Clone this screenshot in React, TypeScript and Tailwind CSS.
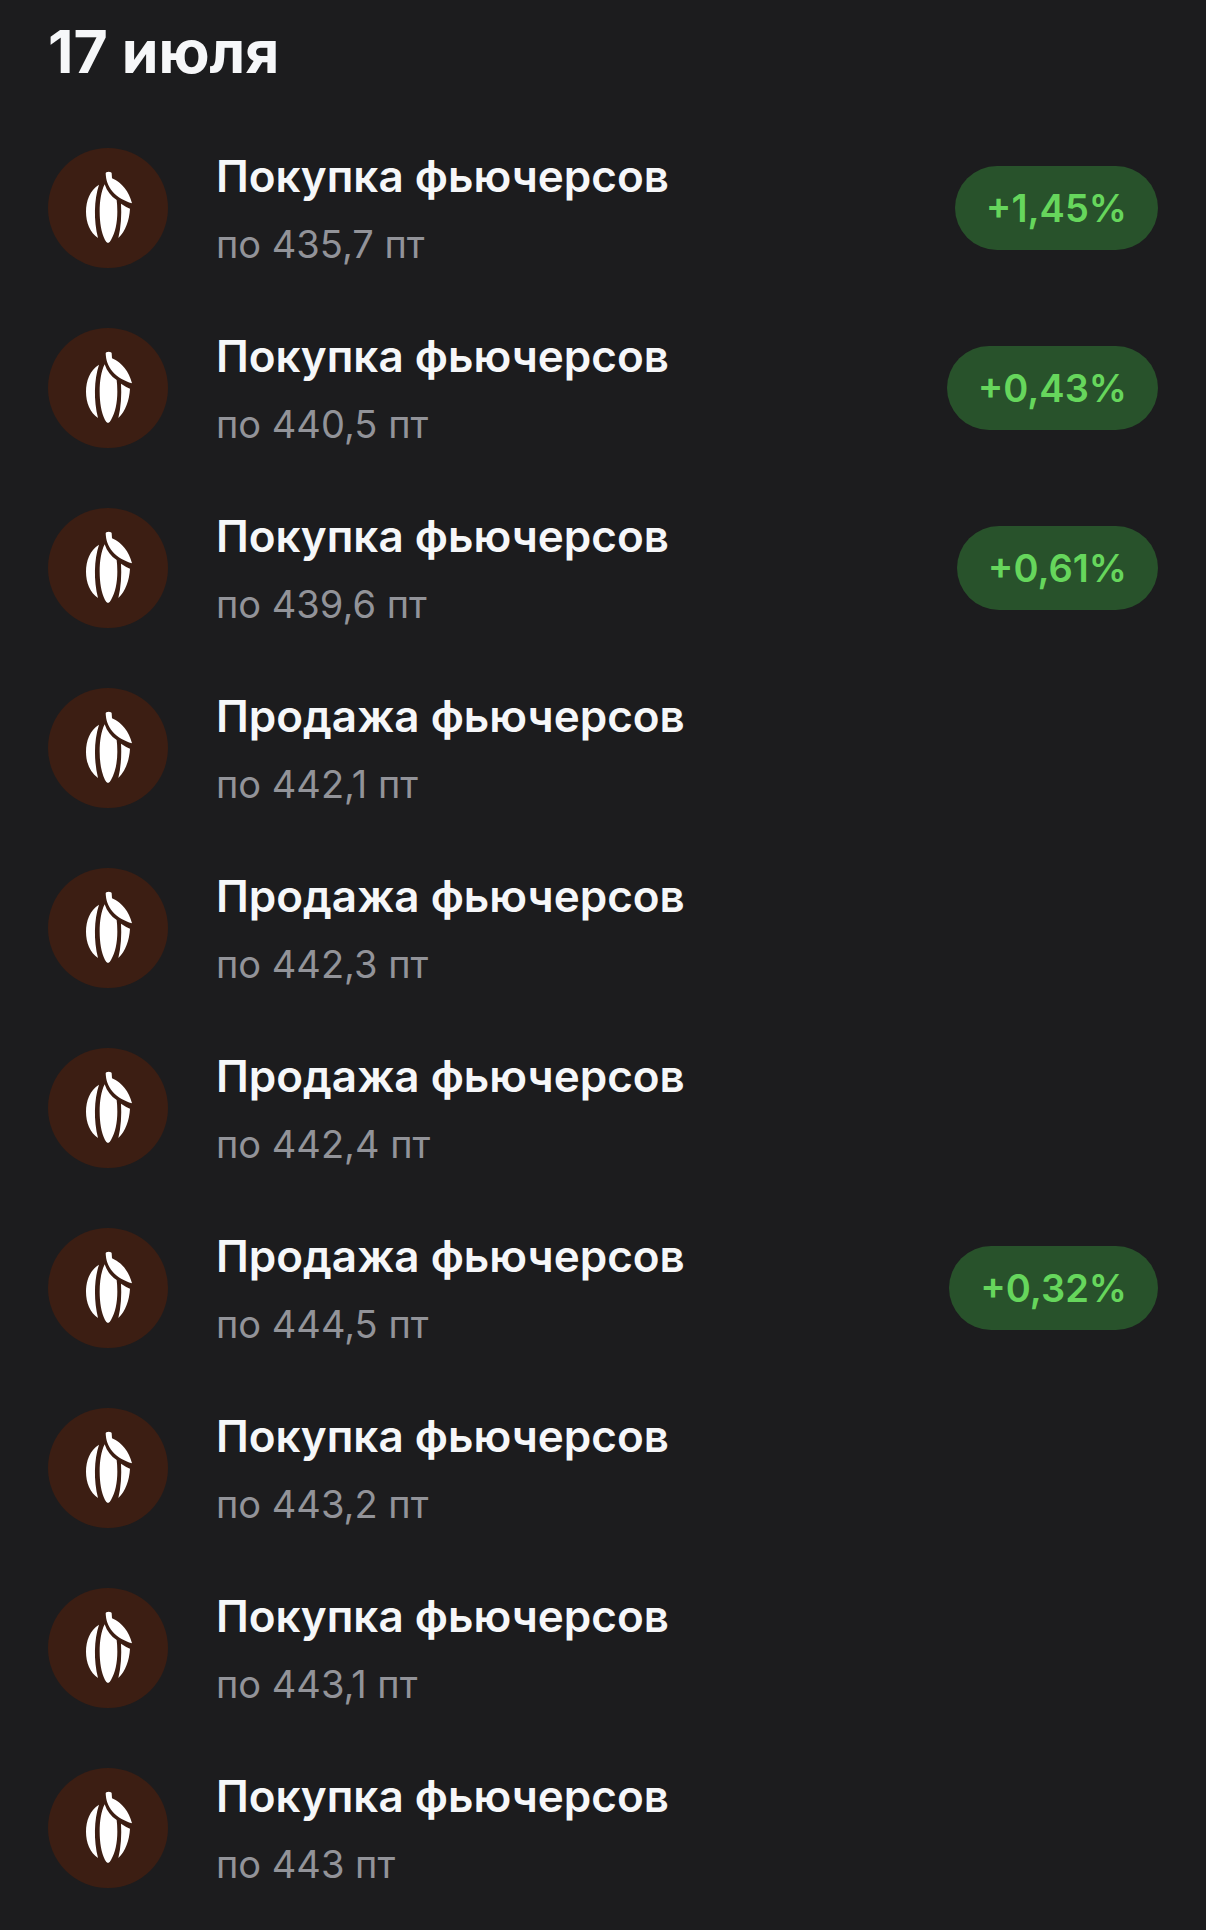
type Operation = {
  id: number;
  title: string;
  price: string;
  change?: string;
};

const operations: Operation[] = [
  { id: 1, title: "Покупка фьючерсов", price: "435,7", change: "+1,45%" },
  { id: 2, title: "Покупка фьючерсов", price: "440,5", change: "+0,43%" },
  { id: 3, title: "Покупка фьючерсов", price: "439,6", change: "+0,61%" },
  { id: 4, title: "Продажа фьючерсов", price: "442,1" },
  { id: 5, title: "Продажа фьючерсов", price: "442,3" },
  { id: 6, title: "Продажа фьючерсов", price: "442,4" },
  { id: 7, title: "Продажа фьючерсов", price: "444,5", change: "+0,32%" },
  { id: 8, title: "Покупка фьючерсов", price: "443,2" },
  { id: 9, title: "Покупка фьючерсов", price: "443,1" },
  { id: 10, title: "Покупка фьючерсов", price: "443" },
];

function CocoaIcon() {
  return (
    <svg className="size-30 shrink-0 rounded-full bg-[#3c1e13]" viewBox="24 24 360 360" fill="#ffffff" aria-hidden="true">
      <path d="M177 134C150 150 138 182 138 215C138 248 150 277 174 294C161 240 162 180 177 134Z" />
      <path d="M194 133C183 155 179 185 179 215C179 248 184 277 195 300Q204 318 213 300C226 277 232 248 232 215Q232 195 230 180C213 169 201 154 194 133Z" />
      <path d="M197 100Q197 95 206 95Q215 95 215 100L216 115C246 128 267 155 276 190C253 182 232 172 218 155C203 138 198 120 197 100Z" />
      <path d="M243 191Q256 200 270 206C268 240 257 273 235 294C243 260 245 225 243 191Z" />
    </svg>
  );
}

function OperationRow({ title, price, change }: Operation) {
  return (
    <li className="flex items-center gap-12">
      <CocoaIcon />
      <div className="flex-1 min-w-0">
        <h2 className="text-[44px] leading-14 font-semibold text-[#f6f7f9]">{title}</h2>
        <p className="mt-4 text-[38px] leading-12 text-[#929399]">по {price} пт</p>
      </div>
      {change && (
        <span className="shrink-0 rounded-full bg-[#28522b] px-[31px] py-4 text-[38px] leading-[52px] font-semibold text-[#66d65c]">
          {change}
        </span>
      )}
    </li>
  );
}

export default function App() {
  return (
    <main className="min-h-screen bg-[#1c1c1e] px-12 pt-5 pb-10 font-['Inter',sans-serif]">
      <h1 className="text-[59px] leading-16 font-bold text-[#f6f7f9]">17 июля</h1>
      <ul className="mt-16 flex flex-col gap-15">
        {operations.map((op) => (
          <OperationRow key={op.id} {...op} />
        ))}
      </ul>
    </main>
  );
}
